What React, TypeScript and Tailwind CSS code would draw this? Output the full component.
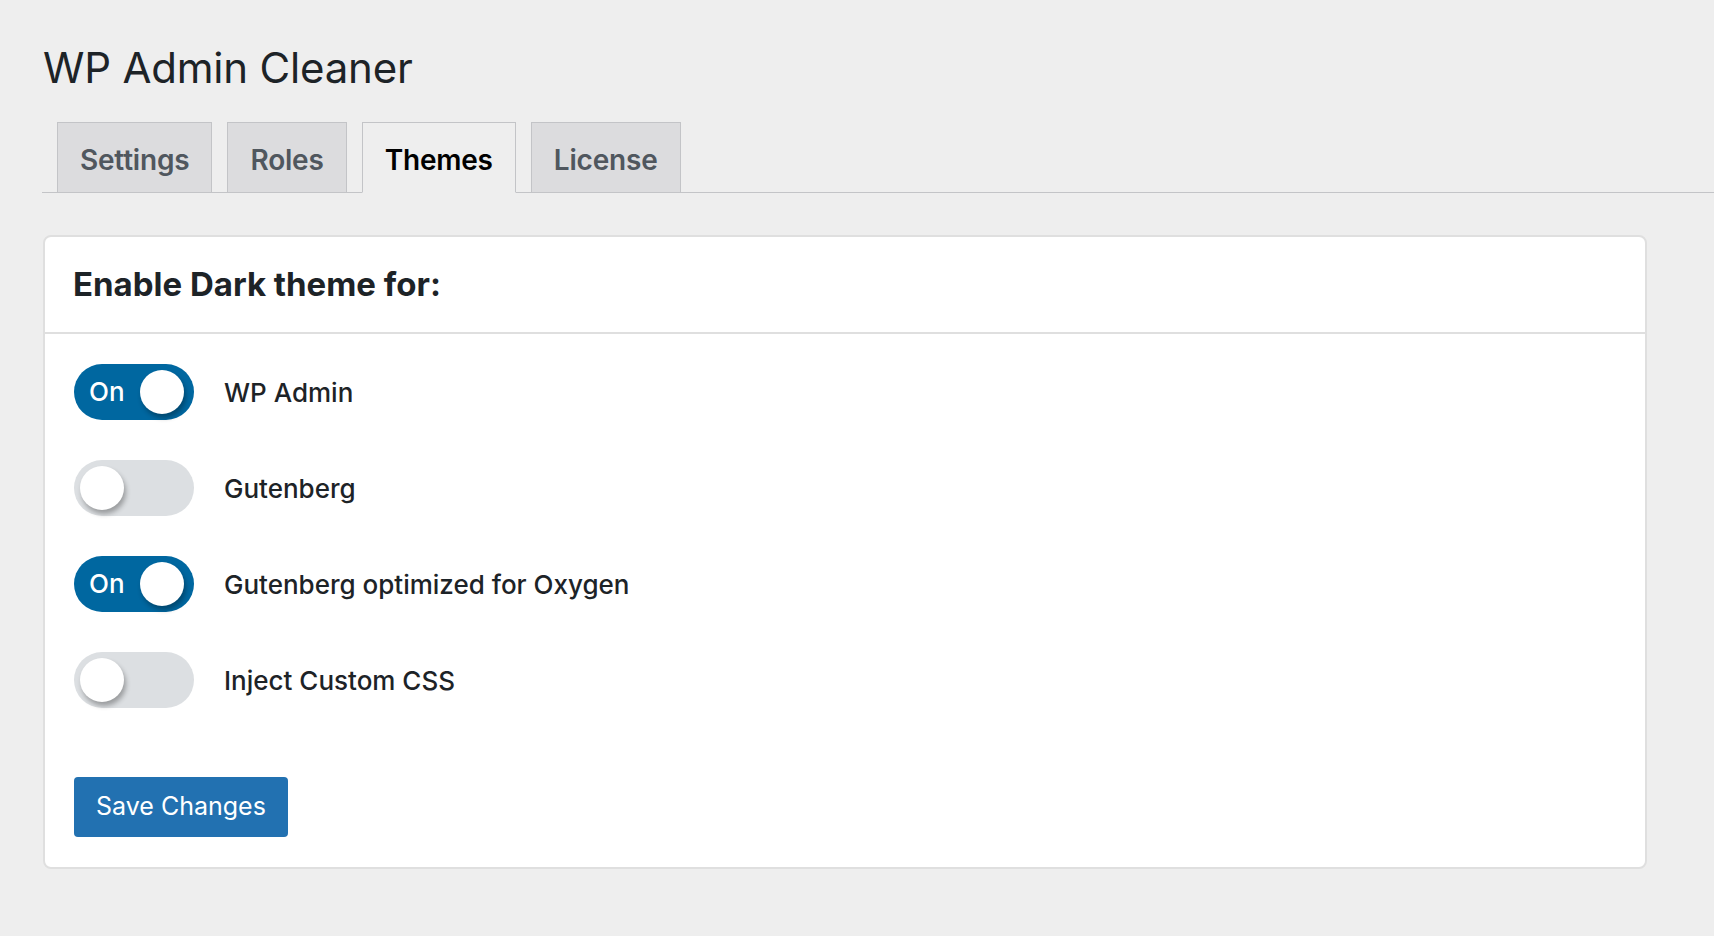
import React, { useState } from 'react';

type Option = { id: string; label: string; on: boolean };

const tabs = ['Settings', 'Roles', 'Themes', 'License'];

const Toggle: React.FC<{ on: boolean; onClick: () => void }> = ({ on, onClick }) => (
  <button
    type="button"
    onClick={onClick}
    className={`relative w-[120px] h-[56px] rounded-full shrink-0 ${on ? 'bg-[#0067a0]' : 'bg-[#dcdfe2]'}`}
  >
    {on && (
      <span className="absolute left-[15px] top-0 h-full flex items-center text-white text-[26px] font-medium leading-none">
        On
      </span>
    )}
    <span
      className={`absolute top-[6px] w-[44px] h-[44px] rounded-full bg-white shadow-[2px_4px_5px_rgba(0,0,0,0.3)] ${on ? 'left-[66px]' : 'left-[6px]'}`}
    />
  </button>
);

export default function App() {
  const [active, setActive] = useState('Themes');
  const [options, setOptions] = useState<Option[]>([
    { id: 'admin', label: 'WP Admin', on: true },
    { id: 'gutenberg', label: 'Gutenberg', on: false },
    { id: 'oxygen', label: 'Gutenberg optimized for Oxygen', on: true },
    { id: 'css', label: 'Inject Custom CSS', on: false },
  ]);

  const flip = (id: string) =>
    setOptions((prev) => prev.map((o) => (o.id === id ? { ...o, on: !o.on } : o)));

  return (
    <div className="min-h-screen bg-[#eeeeee] font-['Inter',sans-serif] text-[#1d2327] pl-[42px] pt-[40px] pb-[60px]">
      <h1 className="text-[42px] leading-[56px] font-normal pl-[1px] tracking-[-0.2px]">WP Admin Cleaner</h1>

      {/* Tabs */}
      <div className="mt-[26px] flex items-end gap-[15px] pl-[15px] border-b border-[#c3c4c7]">
        {tabs.map((t) => {
          const isActive = t === active;
          return (
            <button
              key={t}
              type="button"
              onClick={() => setActive(t)}
              className={`h-[71px] -mb-px pt-[4px] px-[22px] border border-[#c3c4c7] text-[28px] font-semibold leading-none tracking-[-0.2px] ${
                isActive ? 'bg-[#eeeeee] border-b-[#eeeeee] text-black' : 'bg-[#dcdcde] text-[#50575e]'
              }`}
            >
              {t}
            </button>
          );
        })}
      </div>

      {/* Card */}
      <div className="mt-[42px] mr-[67px] ml-px bg-white border-2 border-[#dfdfdf] rounded-[8px]">
        <div className="h-[97px] px-[28px] flex items-center border-b-2 border-[#dfdfdf]">
          <h2 className="text-[33px] font-bold">Enable Dark theme for:</h2>
        </div>
        <div className="px-[29px] pt-[30px] pb-[30px]">
          <div className="flex flex-col gap-[40px]">
            {options.map((o) => (
              <div key={o.id} className="flex items-center gap-[30px]">
                <Toggle on={o.on} onClick={() => flip(o.id)} />
                <span className="text-[26px] font-medium text-[#1d2327]">{o.label}</span>
              </div>
            ))}
          </div>
          <button
            type="button"
            className="mt-[69px] h-[60px] px-[22px] bg-[#2271b1] text-white text-[25px] rounded-[4px]"
          >
            Save Changes
          </button>
        </div>
      </div>
    </div>
  );
}
